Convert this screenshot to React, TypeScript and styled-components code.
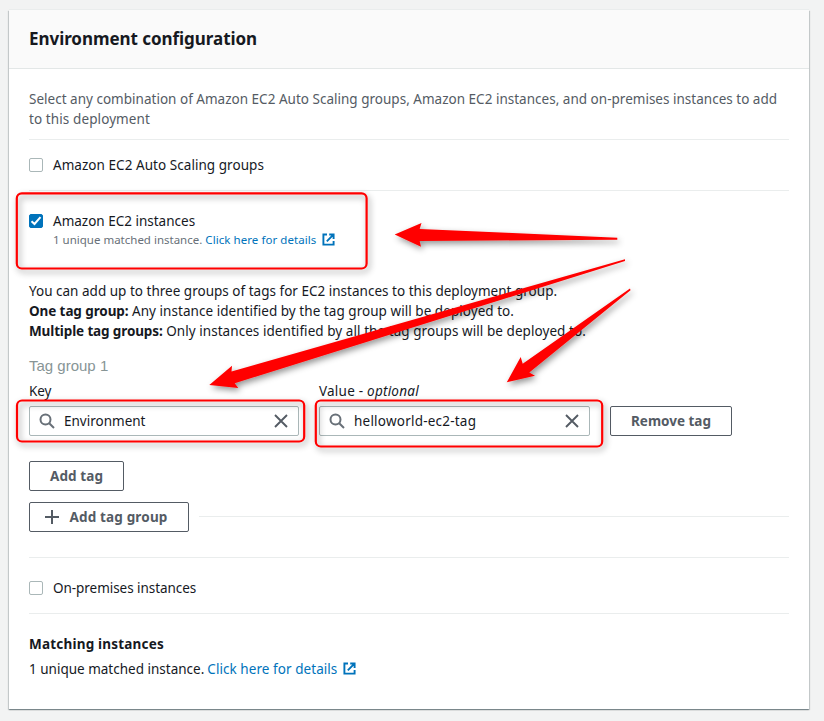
import React from 'react';
import styled, { createGlobalStyle, css } from 'styled-components';

const Global = createGlobalStyle`
  *, *::before, *::after { box-sizing: border-box; }
  html, body { margin: 0; padding: 0; }
  body {
    background: #f2f3f3;
    color: #16191f;
    font: 13.5px/20px "Noto Sans", "Open Sans", sans-serif;
    overflow: hidden;
  }
`;

const Page = styled.main`
  position: relative;
  width: 824px;
  height: 721px;
  padding: 10px 0 0 9px;
`;

const Panel = styled.section`
  width: 800px;
  height: 699px;
  background: #fff;
  box-shadow: 0 1px 1px 0 rgba(0, 28, 36, 0.3), 1px 1px 1px 0 rgba(0, 28, 36, 0.15),
    -1px 1px 1px 0 rgba(0, 28, 36, 0.15), 0 -1px 0 0 #eaeded;
`;

const Header = styled.header`
  height: 59px;
  padding: 0 20px;
  display: flex;
  align-items: center;
  background: #fafafa;
  border-bottom: 1px solid #e3e7e7;
`;

const Title = styled.h2`
  margin: 0;
  font-size: 17px;
  line-height: 22px;
  font-weight: 700;
  letter-spacing: -0.05px;
`;

const Body = styled.div`
  padding: 20px 20px 0;
`;

const Text = styled.span<{ $track?: number }>`
  letter-spacing: ${(p) => p.$track ?? 0}px;
  white-space: pre;
`;

const Description = styled.p`
  margin: 0 0 10px;
  color: #545b64;
`;

const Divider = styled.hr`
  margin: 0;
  border: 0;
  height: 1px;
  flex: 1;
  background: #eaeded;
`;

const Option = styled.label<{ $top: number; $bottom: number }>`
  display: grid;
  grid-template-columns: 14px 1fr;
  column-gap: 10px;
  align-items: center;
  padding: ${(p) => p.$top}px 0 ${(p) => p.$bottom}px;
`;

const Box = styled.span<{ $checked?: boolean }>`
  width: 14px;
  height: 14px;
  display: flex;
  border-radius: 2px;
  border: 1px solid #aab7b8;
  background: #fff;
  ${(p) =>
    p.$checked &&
    css`
      border-color: #0073bb;
      background: #0073bb;
    `}
`;

const Hint = styled.span`
  grid-column: 2;
  display: flex;
  align-items: center;
  font-size: 11.5px;
  line-height: 18px;
  color: #687078;
`;

const Link = styled.a`
  display: inline-flex;
  align-items: center;
  gap: 6px;
  margin-left: 3px;
  color: #0073bb;

  svg {
    margin-bottom: 1px;
  }
`;

const Lines = styled.div`
  display: flex;
  flex-direction: column;
`;

const Line = styled.p`
  margin: 0;
  display: flex;
  align-items: center;
`;

const GroupName = styled.div`
  margin-top: 15px;
  font: 15px/20px "Liberation Sans", Arial, sans-serif;
  color: #879596;
`;

const TagRow = styled.div`
  display: grid;
  grid-template-columns: 270px 271px 122px;
  column-gap: 20px;
  align-items: end;
  margin-top: 5px;
`;

const Field = styled.div`
  display: flex;
  flex-direction: column;
  gap: 5px;
`;

const Input = styled.div`
  height: 30px;
  display: flex;
  align-items: center;
  padding: 0 10px 0 9px;
  border: 1px solid #aab7b8;
  border-radius: 2px;
  background: #fff;
`;

const Value = styled.span`
  flex: 1;
  margin-left: 9px;
`;

const Button = styled.button<{ $width: number; $top?: number }>`
  width: ${(p) => p.$width}px;
  height: 30px;
  margin: ${(p) => p.$top ?? 0}px 0 0;
  padding: 0;
  display: flex;
  align-items: center;
  justify-content: center;
  border: 1px solid #545b64;
  border-radius: 2px;
  background: #fff;
  color: #545b64;
  font: 700 13.5px/20px "Noto Sans", "Open Sans", sans-serif;

  svg {
    margin: 0 10px 0 -5px;
  }
`;

const GroupRow = styled.div`
  display: flex;
  align-items: center;
  gap: 10px;
  margin: 11px 0 25px;

  ${Divider} {
    margin-bottom: 1px;
  }
`;

const Matching = styled.div`
  padding-top: 20px;
  display: flex;
  flex-direction: column;
  gap: 5px;
`;

const Markup = styled.svg`
  position: absolute;
  left: 0;
  top: 0;
  pointer-events: none;
`;

const External = () => (
  <svg width="13" height="13" viewBox="0 0 13 13" fill="none" stroke="#0073bb" strokeWidth="1.9">
    <path d="M5 1.5H1.4v10.1h10.2V8M7.2 1.5h4.4V6M11.4 1.7L4.8 8.3" />
  </svg>
);

const Search = () => (
  <svg width="16" height="16" viewBox="0 0 16 16" fill="none" stroke="#687078" strokeWidth="2">
    <circle cx="6.5" cy="6.5" r="5" />
    <path d="M10.2 10.2L15 15" />
  </svg>
);

const Close = () => (
  <svg width="14" height="14" viewBox="0 0 14 14" fill="none" stroke="#545b64" strokeWidth="1.9">
    <path d="M1 1l12 12M13 1L1 13" />
  </svg>
);

const Plus = () => (
  <svg width="14" height="14" viewBox="0 0 14 14" fill="none" stroke="#545b64" strokeWidth="2">
    <path d="M7 0v14M0 7h14" />
  </svg>
);

const Check = () => (
  <svg width="12" height="12" viewBox="0 0 12 12" fill="none" stroke="#fff" strokeWidth="2">
    <path d="M1.5 6.2l3 2.8 6-6.8" />
  </svg>
);

const frames = [
  { x: 16.8, y: 193.3, w: 349.8, h: 75.2 },
  { x: 17, y: 400.5, w: 287.2, h: 41 },
  { x: 315.8, y: 400.5, w: 286.4, h: 46 },
];

const arrows = [
  '394.7,234.5 421.5,223 419.7,229 617.3,237.7 617.3,239.7 419.7,241 421,246.7',
  '209.3,385 232,365.7 231.5,371.5 625,259.2 625,261 234.7,383.3 238.3,388',
  '506.8,382.3 520.7,357 522.7,363.7 630,288.6 630.5,290.3 529.3,372.5 535,375.7',
];

export default function App() {
  return (
    <Page>
      <Global />
      <Panel>
        <Header>
          <Title>Environment configuration</Title>
        </Header>
        <Body>
          <Description>
            <Text $track={0.013}>
              Select any combination of Amazon EC2 Auto Scaling groups, Amazon EC2 instances, and on-premises instances to add
            </Text>
            <br />
            <Text $track={0.1}>to this deployment</Text>
          </Description>
          <Divider />
          <Option $top={15} $bottom={15}>
            <Box />
            <Text $track={0.05}>Amazon EC2 Auto Scaling groups</Text>
          </Option>
          <Divider />
          <Option $top={20} $bottom={32}>
            <Box $checked>
              <Check />
            </Box>
            <Text>Amazon EC2 instances</Text>
            <Hint>
              <Text>1 unique matched instance.</Text>
              <Link>
                <Text $track={0.06}>Click here for details</Text>
                <External />
              </Link>
            </Hint>
          </Option>
          <Lines>
            <Line>
              <Text $track={0.013}>You can add up to three groups of tags for EC2 instances to this deployment group.</Text>
            </Line>
            <Line>
              <Text as="b" $track={-0.1}>One tag group:</Text>
              <Text $track={0.045}>{' Any instance identified by the tag group will be deployed to.'}</Text>
            </Line>
            <Line>
              <Text as="b" $track={-0.13}>Multiple tag groups:</Text>
              <Text $track={0.06}>{' Only instances identified by all the tag groups will be deployed to.'}</Text>
            </Line>
          </Lines>
          <GroupName>Tag group 1</GroupName>
          <TagRow>
            <Field>
              <Text $track={-0.1}>Key</Text>
              <Input>
                <Search />
                <Value>
                  <Text>Environment</Text>
                </Value>
                <Close />
              </Input>
            </Field>
            <Field>
              <Text $track={0.23}>
                Value - <i>optional</i>
              </Text>
              <Input>
                <Search />
                <Value>
                  <Text $track={0.22}>helloworld-ec2-tag</Text>
                </Value>
                <Close />
              </Input>
            </Field>
            <Button $width={122}>
              <Text>Remove tag</Text>
            </Button>
          </TagRow>
          <Button $width={95} $top={25}>
            <Text $track={0.1}>Add tag</Text>
          </Button>
          <GroupRow>
            <Button $width={160}>
              <Plus />
              <Text $track={0.16}>Add tag group</Text>
            </Button>
            <Divider />
          </GroupRow>
          <Divider />
          <Option $top={20} $bottom={15}>
            <Box />
            <Text $track={-0.05}>On-premises instances</Text>
          </Option>
          <Divider />
          <Matching>
            <Text as="b" $track={0.2}>Matching instances</Text>
            <Line>
              <Text>1 unique matched instance.</Text>
              <Link>
                <Text $track={0.06}>Click here for details</Text>
                <External />
              </Link>
            </Line>
          </Matching>
        </Body>
      </Panel>
      <Markup width="824" height="721" viewBox="0 0 824 721">
        <defs>
          <filter id="cast" x="0" y="0" width="824" height="721" filterUnits="userSpaceOnUse">
            <feDropShadow dx="2" dy="3" stdDeviation="3" floodColor="#000" floodOpacity="0.42" />
          </filter>
        </defs>
        <g filter="url(#cast)">
          {frames.map((f) => (
            <rect key={f.x} x={f.x} y={f.y} width={f.w} height={f.h} rx="5" fill="none" stroke="#f00" strokeWidth="2.2" />
          ))}
          {arrows.map((a) => (
            <polygon key={a} points={a} fill="#f00" />
          ))}
        </g>
      </Markup>
    </Page>
  );
}
